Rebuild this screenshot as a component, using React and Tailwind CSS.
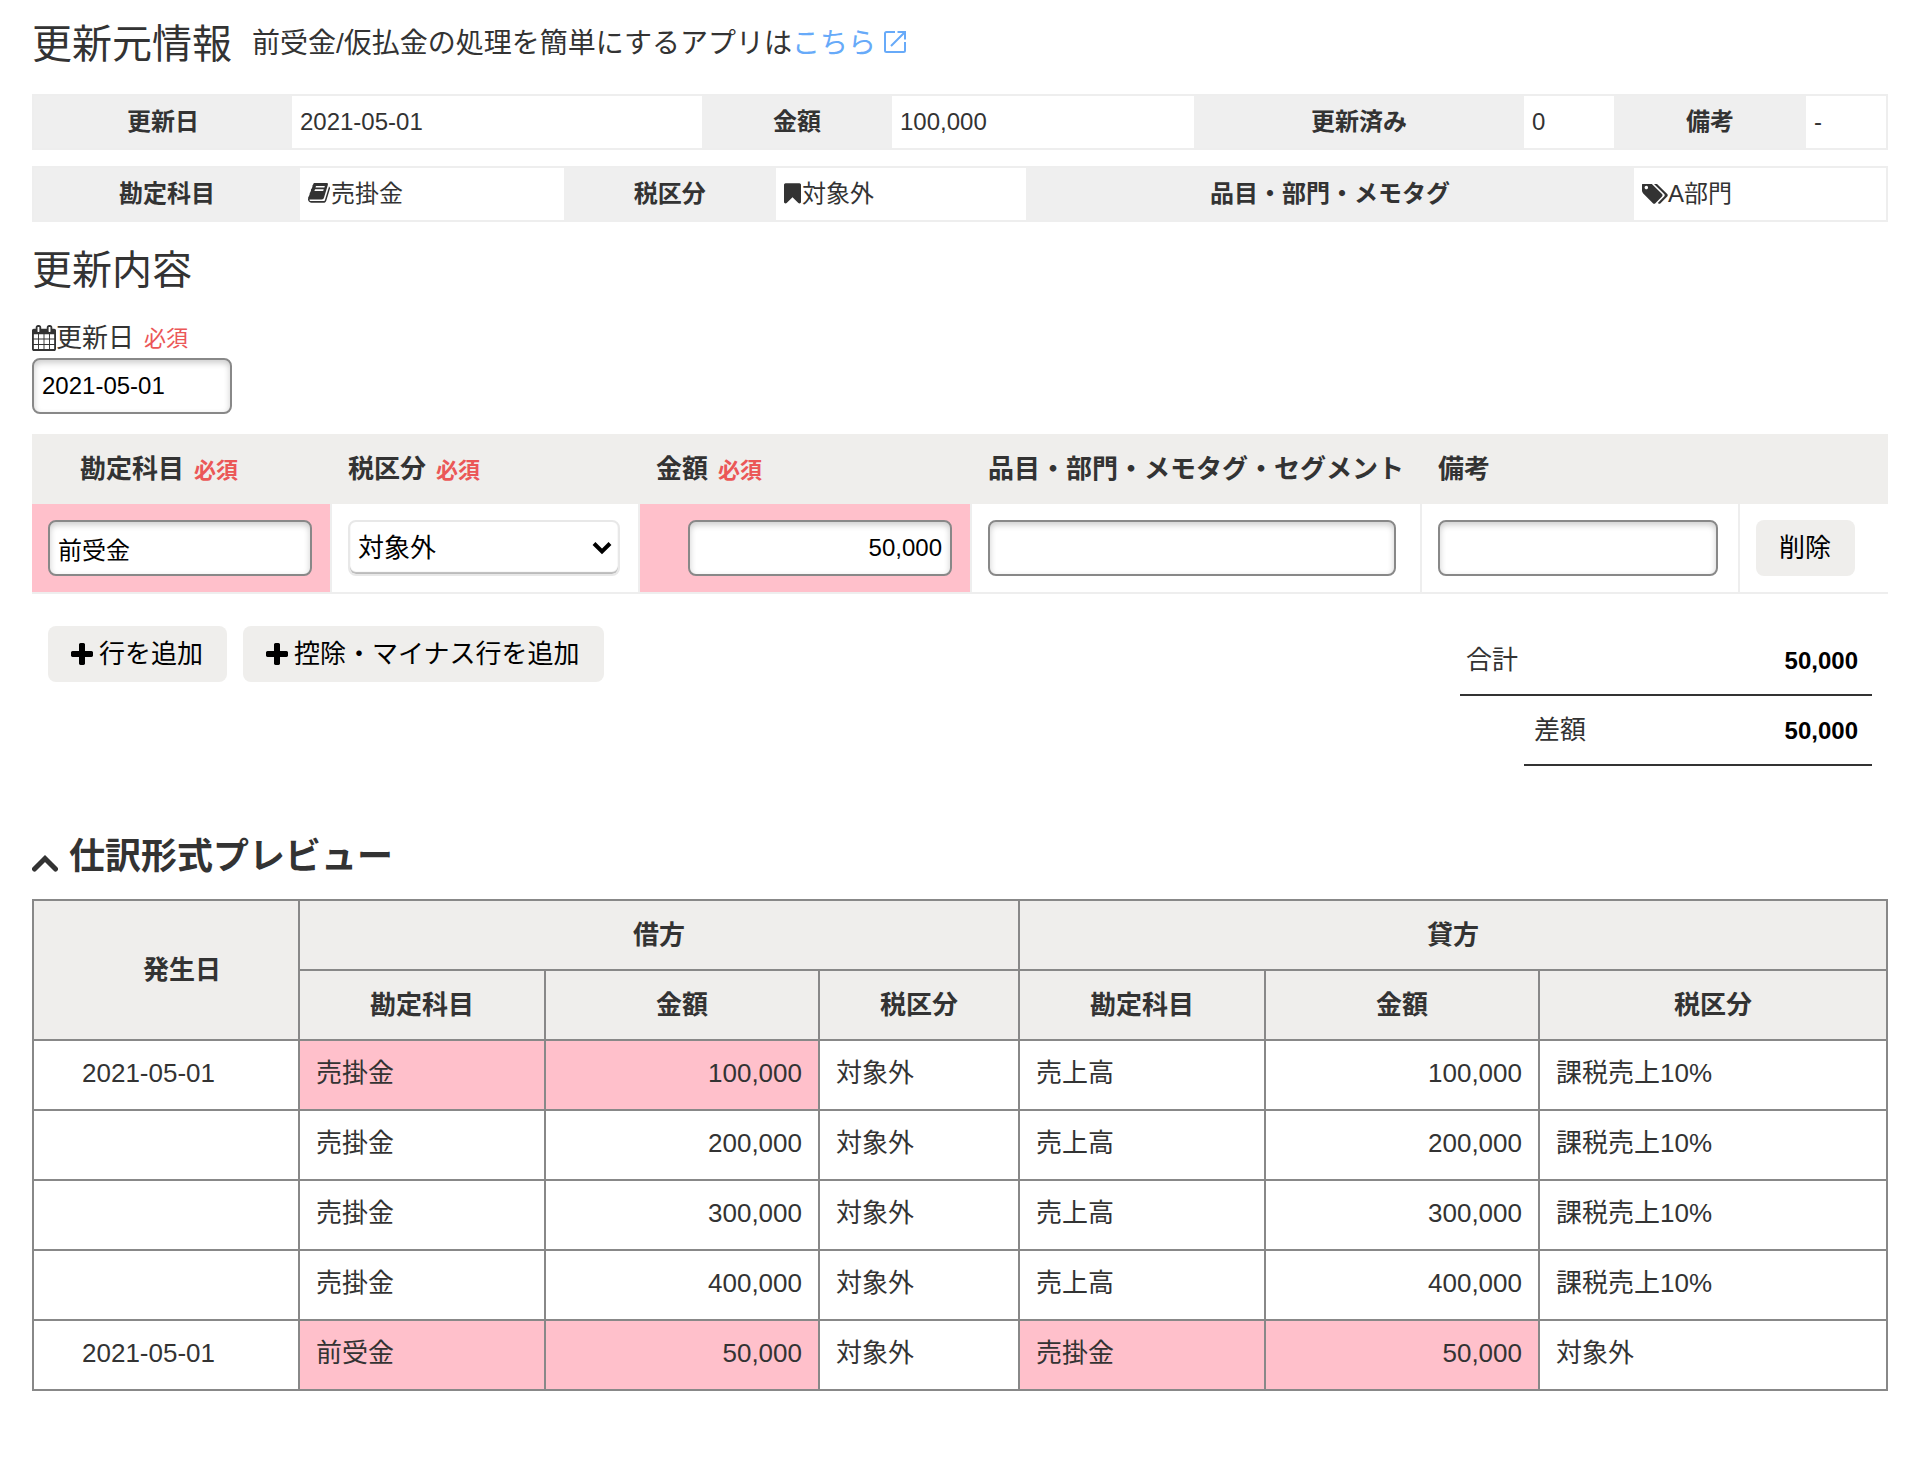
import React, { useState } from 'react';

const journalRows = [
  { date: '2021-05-01', debit: ['売掛金', '100,000', '対象外'], credit: ['売上高', '100,000', '課税売上10%'], debitMarked: true },
  { date: '', debit: ['売掛金', '200,000', '対象外'], credit: ['売上高', '200,000', '課税売上10%'] },
  { date: '', debit: ['売掛金', '300,000', '対象外'], credit: ['売上高', '300,000', '課税売上10%'] },
  { date: '', debit: ['売掛金', '400,000', '対象外'], credit: ['売上高', '400,000', '課税売上10%'] },
  { date: '2021-05-01', debit: ['前受金', '50,000', '対象外'], credit: ['売掛金', '50,000', '対象外'], debitMarked: true, creditMarked: true },
];

const inputClass =
  'block h-14 rounded-lg border-2 border-[#888] bg-white px-2 text-2xl text-black shadow-[inset_0_3px_6px_rgba(0,0,0,0.2)] focus:outline-none';

const buttonClass =
  'inline-flex h-14 cursor-pointer items-center gap-1.5 whitespace-nowrap rounded-lg bg-[#efeeec] pl-[23px] pr-6 text-[26px] text-black hover:bg-[#e4e3e1]';

const BookIcon = () => (
  <svg viewBox="0 192 1664 1536" className="mr-px inline-block h-[21px] w-[22px] align-[-2px]" fill="currentColor" aria-hidden="true">
    <path d="M1639 478q40 57 18 129l-275 906q-19 64-76.5 107.5t-122.5 43.5h-923q-77 0-148.5-53.5t-99.5-131.5q-24-67-2-127 0-4 3-27t4-37q1-8-3-21.5t-3-19.5q2-11 8-21t16.5-23.5 16.5-23.5q23-38 45-91.5t30-91.5q3-10 .5-30t-.5-28q3-11 17-28t17-23q21-36 42-92t25-90q1-9-2.5-32t.5-28q4-13 22-30.5t22-22.5q19-26 42.5-84.5t27.5-96.5q1-8-3-25.5t-2-26.5q2-8 9-18t18-23 17-21q8-12 16.5-30.5t15-35 16-36 19.5-32 26.5-23.5 36-11.5 47.5 5.5l-1 3q38-9 51-9h761q74 0 114 56t18 130l-274 906q-36 119-71.5 153.5t-128.5 34.5h-869q-27 0-38 15-11 16-1 43 24 70 144 70h923q29 0 56-15.5t35-41.5l300-987q7-22 5-57 38 15 59 43zm-1064 2q-4 13 2 22.5t20 9.5h608q13 0 25.5-9.5t16.5-22.5l21-64q4-13-2-22.5t-20-9.5h-608q-13 0-25.5 9.5t-16.5 22.5zm-83 256q-4 13 2 22.5t20 9.5h608q13 0 25.5-9.5t16.5-22.5l21-64q4-13-2-22.5t-20-9.5h-608q-13 0-25.5 9.5t-16.5 22.5z" />
  </svg>
);

const BookmarkIcon = () => (
  <svg viewBox="256 128 1280 1536" className="mr-px inline-block h-[21px] w-[17px] align-[-2px]" fill="currentColor" aria-hidden="true">
    <path d="M1420 128q23 0 44 9 33 13 52.5 41t19.5 62v1289q0 34-19.5 62t-52.5 41q-19 8-44 8-48 0-83-32l-441-424-441 424q-36 33-83 33-23 0-44-9-33-13-52.5-41t-19.5-62v-1289q0-34 19.5-62t52.5-41q21-9 44-9h1048z" />
  </svg>
);

const TagsIcon = () => (
  <svg viewBox="128 192 1920 1472" className="inline-block h-5 w-[26px] align-[-2px]" fill="currentColor" aria-hidden="true">
    <path d="M576 448q0-53-37.5-90.5t-90.5-37.5-90.5 37.5-37.5 90.5 37.5 90.5 90.5 37.5 90.5-37.5 37.5-90.5zm1067 576q0 53-37 90l-491 492q-39 37-91 37-53 0-90-37l-715-716q-38-37-64.5-101t-26.5-117v-416q0-52 38-90t90-38h416q53 0 117 26.5t102 64.5l715 714q37 39 37 91zm384 0q0 53-37 90l-491 492q-39 37-91 37-36 0-59-14t-53-45l470-470q37-37 37-90 0-52-37-91l-715-714q-38-38-102-64.5t-117-26.5h224q53 0 117 26.5t102 64.5l715 714q37 39 37 91z" />
  </svg>
);

const CalendarIcon = () => (
  <svg viewBox="64 0 1664 1792" className="h-[26px] w-6" fill="currentColor" aria-hidden="true">
    <path d="M192 1664h288v-288h-288v288zm352 0h320v-288h-320v288zm-352-352h288v-320h-288v320zm352 0h320v-320h-320v320zm-352-384h288v-288h-288v288zm736 736h320v-288h-320v288zm-384-736h320v-288h-320v288zm768 736h288v-288h-288v288zm-384-352h320v-320h-320v320zm-352-864v-288q0-13-9.5-22.5t-22.5-9.5h-64q-13 0-22.5 9.5t-9.5 22.5v288q0 13 9.5 22.5t22.5 9.5h64q13 0 22.5-9.5t9.5-22.5zm736 864h288v-320h-288v320zm-384-384h320v-288h-320v288zm384 0h288v-288h-288v288zm32-480v-288q0-13-9.5-22.5t-22.5-9.5h-64q-13 0-22.5 9.5t-9.5 22.5v288q0 13 9.5 22.5t22.5 9.5h64q13 0 22.5-9.5t9.5-22.5zm384-64v1280q0 52-38 90t-90 38h-1408q-52 0-90-38t-38-90v-1280q0-52 38-90t90-38h128v-96q0-66 47-113t113-47h64q66 0 113 47t47 113v96h384v-96q0-66 47-113t113-47h64q66 0 113 47t47 113v96h128q52 0 90 38t38 90z" />
  </svg>
);

const PlusIcon = () => (
  <svg viewBox="192 128 1408 1408" className="h-[22px] w-[22px]" fill="currentColor" aria-hidden="true">
    <path d="M1600 736v192q0 40-28 68t-68 28h-416v416q0 40-28 68t-68 28h-192q-40 0-68-28t-28-68v-416h-416q-40 0-68-28t-28-68v-192q0-40 28-68t68-28h416v-416q0-40 28-68t68-28h192q40 0 68 28t28 68v416h416q40 0 68 28t28 68z" />
  </svg>
);

const ExternalIcon = () => (
  <svg viewBox="0 0 22 22" className="mb-1 ml-2 h-[22px] w-[22px]" fill="none" stroke="currentColor" strokeWidth="2" aria-hidden="true">
    <path d="M11 1H2.500Q1 1 1 2.500V19.500Q1 21 2.500 21H19.500Q21 21 21 19.500V11" />
    <path d="M13.500 1H21V8.500M20.500 1.500L7 15" />
  </svg>
);

const Required = () => <span className="ml-[10px] text-[22px] text-[#eb5757]">必須</span>;

const InfoHead = ({ children }) => <th className="bg-[#efefef] p-0 text-center font-bold">{children}</th>;
const InfoCell = ({ children }) => <td className="px-2 py-0">{children}</td>;

export default function App() {
  const [date, setDate] = useState('2021-05-01');
  const [account, setAccount] = useState('前受金');
  const [tax, setTax] = useState('対象外');
  const [amount, setAmount] = useState('50,000');
  const [tags, setTags] = useState('');
  const [note, setNote] = useState('');
  const [previewOpen, setPreviewOpen] = useState(true);

  const mark = (on) => (on ? 'bg-[#ffc0cb]' : '');

  return (
    <main className="min-h-screen bg-white pb-[70px] pl-8 pr-[30px] pt-[14px] font-['Liberation_Sans','Noto_Sans_CJK_JP',sans-serif] text-[#333]">
      <header className="flex h-[60px] items-center gap-5">
        <h1 className="text-[40px] leading-[60px]">更新元情報</h1>
        <p className="flex items-center text-[28px] leading-10">
          前受金/仮払金の処理を簡単にするアプリは
          <a href="#app" className="flex items-center text-[#67aaf9]">
            こちら
            <ExternalIcon />
          </a>
        </p>
      </header>

      <table className="mt-5 h-14 w-full table-fixed border-separate border-spacing-0 border-2 border-[#eee] text-2xl">
        <colgroup>
          <col className="w-[13.93%]" />
          <col className="w-[22.14%]" />
          <col className="w-[10.26%]" />
          <col className="w-[16.31%]" />
          <col className="w-[17.82%]" />
          <col className="w-[4.86%]" />
          <col className="w-[10.37%]" />
          <col />
        </colgroup>
        <tbody>
          <tr>
            <InfoHead>更新日</InfoHead>
            <InfoCell>2021-05-01</InfoCell>
            <InfoHead>金額</InfoHead>
            <InfoCell>100,000</InfoCell>
            <InfoHead>更新済み</InfoHead>
            <InfoCell>0</InfoCell>
            <InfoHead>備考</InfoHead>
            <InfoCell>-</InfoCell>
          </tr>
        </tbody>
      </table>

      <table className="mt-4 h-14 w-full table-fixed border-separate border-spacing-0 border-2 border-[#eee] text-2xl">
        <colgroup>
          <col className="w-[14.36%]" />
          <col className="w-[14.25%]" />
          <col className="w-[11.45%]" />
          <col className="w-[13.5%]" />
          <col className="w-[32.83%]" />
          <col />
        </colgroup>
        <tbody>
          <tr>
            <InfoHead>勘定科目</InfoHead>
            <InfoCell><BookIcon />売掛金</InfoCell>
            <InfoHead>税区分</InfoHead>
            <InfoCell><BookmarkIcon />対象外</InfoCell>
            <InfoHead>品目・部門・メモタグ</InfoHead>
            <InfoCell><TagsIcon />A部門</InfoCell>
          </tr>
        </tbody>
      </table>

      <h2 className="mt-[18px] text-[40px] leading-[60px]">更新内容</h2>

      <div className="mt-[18px]">
        <label htmlFor="update-date" className="flex h-10 items-center text-[26px]">
          <CalendarIcon />
          <span>更新日</span>
          <Required />
        </label>
        <input id="update-date" type="text" value={date} onChange={(e) => setDate(e.target.value)} className={`${inputClass} w-[200px]`} />
      </div>

      <table className="mt-5 w-full table-fixed border-separate border-spacing-0 text-[26px]">
        <colgroup>
          <col className="w-[300px]" />
          <col className="w-[308px]" />
          <col className="w-[332px]" />
          <col />
          <col className="w-[318px]" />
          <col className="w-[148px]" />
        </colgroup>
        <thead>
          <tr className="h-[70px] whitespace-nowrap bg-[#efeeec] text-left">
            <th className="pl-12"><label htmlFor="account">勘定科目<Required /></label></th>
            <th className="pl-4"><label htmlFor="tax">税区分<Required /></label></th>
            <th className="pl-4"><label htmlFor="amount">金額<Required /></label></th>
            <th className="pl-4"><label htmlFor="tags">品目・部門・メモタグ・セグメント</label></th>
            <th className="pl-4"><label htmlFor="note">備考</label></th>
            <th aria-label="操作"></th>
          </tr>
        </thead>
        <tbody>
          <tr className="h-[90px] [&>td]:border-b-2 [&>td]:border-r-2 [&>td]:border-[#eee] [&>td:last-child]:border-r-0">
            <td className="bg-[#ffc0cb] bg-clip-padding pl-4 pr-[18px]">
              <input id="account" type="text" value={account} onChange={(e) => setAccount(e.target.value)} className={`${inputClass} w-full`} />
            </td>
            <td className="pl-4 pr-[18px]">
              <div className="relative">
                <select
                  id="tax"
                  value={tax}
                  onChange={(e) => setTax(e.target.value)}
                  className="block h-14 w-full appearance-none rounded-lg border-2 border-[#e8e8e8] bg-white px-2 text-[26px] text-black shadow-[inset_0_-2px_1px_#bbb] focus:outline-none"
                >
                  <option>対象外</option>
                  <option>課税売上10%</option>
                </select>
                <svg viewBox="0 0 20 16" className="pointer-events-none absolute right-2 top-5 h-4 w-5" fill="none" stroke="#000" strokeWidth="4" aria-hidden="true">
                  <path d="M2 3.500l8 8 8-8" />
                </svg>
              </div>
            </td>
            <td className="bg-[#ffc0cb] bg-clip-padding pl-12 pr-[18px]">
              <input id="amount" type="text" value={amount} onChange={(e) => setAmount(e.target.value)} className={`${inputClass} w-full text-right`} />
            </td>
            <td className="pl-4 pr-6">
              <input id="tags" type="text" value={tags} onChange={(e) => setTags(e.target.value)} className={`${inputClass} w-full`} />
            </td>
            <td className="pl-4 pr-5">
              <input id="note" type="text" value={note} onChange={(e) => setNote(e.target.value)} className={`${inputClass} w-full`} />
            </td>
            <td className="pl-4">
              <button type="button" className={buttonClass}>削除</button>
            </td>
          </tr>
        </tbody>
      </table>

      <div className="mt-8 flex items-start justify-between px-4">
        <div className="flex gap-4">
          <button type="button" className={buttonClass}><PlusIcon />行を追加</button>
          <button type="button" className={buttonClass}><PlusIcon />控除・マイナス行を追加</button>
        </div>
        <dl className="flex flex-col items-end">
          <div className="flex h-[70px] w-[412px] items-center justify-between border-b-2 border-[#333] pl-[6px] pr-[14px]">
            <dt className="text-[26px]">合計</dt>
            <dd className="pt-0.5 text-2xl font-bold text-black">50,000</dd>
          </div>
          <div className="flex h-[70px] w-[348px] items-center justify-between border-b-2 border-[#333] pl-[10px] pr-[14px]">
            <dt className="text-[26px]">差額</dt>
            <dd className="pt-0.5 text-2xl font-bold text-black">50,000</dd>
          </div>
        </dl>
      </div>

      <h3 className="mt-16 text-4xl font-bold leading-[54px]">
        <button type="button" onClick={() => setPreviewOpen(!previewOpen)} aria-expanded={previewOpen} className="flex cursor-pointer items-center gap-[11px]">
          <svg viewBox="0 0 26 36" className={previewOpen ? 'h-9 w-[26px]' : 'h-9 w-[26px] rotate-180'} fill="none" stroke="currentColor" strokeWidth="5" strokeLinecap="round" aria-hidden="true">
            <path d="M2.500 30L13 19.500L23.500 30" />
          </svg>
          仕訳形式プレビュー
        </button>
      </h3>

      {previewOpen && (
        <table className="mt-[15px] w-full table-fixed border-collapse text-[26px] [&_td]:border-2 [&_td]:border-[#888] [&_td]:px-4 [&_td]:pb-[3px] [&_th]:border-2 [&_th]:border-[#888] [&_th]:px-4">
          <colgroup>
            <col className="w-[266px]" />
            <col className="w-[246px]" />
            <col className="w-[274px]" />
            <col className="w-[200px]" />
            <col className="w-[246px]" />
            <col className="w-[274px]" />
            <col />
          </colgroup>
          <thead className="bg-[#efeeec]">
            <tr className="h-[70px]">
              <th rowSpan={2} className="pl-12!">発生日</th>
              <th colSpan={3}>借方</th>
              <th colSpan={3}>貸方</th>
            </tr>
            <tr className="h-[70px]">
              <th>勘定科目</th>
              <th>金額</th>
              <th>税区分</th>
              <th>勘定科目</th>
              <th>金額</th>
              <th>税区分</th>
            </tr>
          </thead>
          <tbody>
            {journalRows.map((row, i) => (
              <tr key={i} className="h-[70px]">
                <td className="pl-12!">{row.date}</td>
                <td className={mark(row.debitMarked)}>{row.debit[0]}</td>
                <td className={`text-right ${mark(row.debitMarked)}`}>{row.debit[1]}</td>
                <td>{row.debit[2]}</td>
                <td className={mark(row.creditMarked)}>{row.credit[0]}</td>
                <td className={`text-right ${mark(row.creditMarked)}`}>{row.credit[1]}</td>
                <td>{row.credit[2]}</td>
              </tr>
            ))}
          </tbody>
        </table>
      )}
    </main>
  );
}
